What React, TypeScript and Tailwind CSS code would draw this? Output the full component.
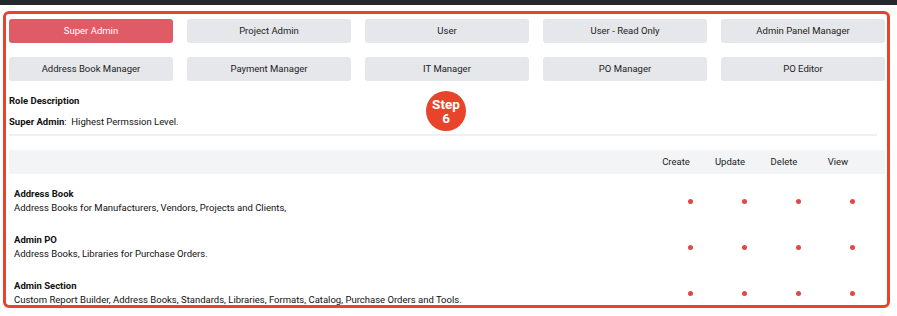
import React from "react";

const roles = [
  "Super Admin",
  "Project Admin",
  "User",
  "User - Read Only",
  "Admin Panel Manager",
  "Address Book Manager",
  "Payment Manager",
  "IT Manager",
  "PO Manager",
  "PO Editor",
];

const rows = [
  { title: "Address Book", desc: "Address Books for Manufacturers, Vendors, Projects and Clients," },
  { title: "Admin PO", desc: "Address Books, Libraries for Purchase Orders." },
  {
    title: "Admin Section",
    desc: "Custom Report Builder, Address Books, Standards, Libraries, Formats, Catalog, Purchase Orders and Tools.",
  },
];

const cols = ["Create", "Update", "Delete", "View"];

export default function App() {
  return (
    <div
      className="w-[897px] h-[316px] bg-white overflow-hidden text-[#111]"
      style={{ fontFamily: "Roboto, 'Liberation Sans', sans-serif" }}
    >
      <div className="h-[5px] bg-[#25282c]" />
      <div className="relative mt-[6px] ml-[3px] w-[887px] h-[297px] border-[3px] border-[#e8442b] rounded-[6px] overflow-hidden">
        <div className="pl-[3px] pt-[5px]">
          <div className="grid grid-cols-[repeat(5,164px)] gap-[14px]">
            {roles.map((r, i) => (
              <div
                key={r}
                className={
                  i === 0
                    ? "h-[24px] rounded-[3px] flex items-center justify-center text-[9.5px] bg-[#df5c67] text-white"
                    : "h-[24px] rounded-[3px] flex items-center justify-center text-[9.5px] bg-[#e6e7ea] text-[#222]"
                }
              >
                {r}
              </div>
            ))}
          </div>
          <div className="mt-[13px] text-[9.5px] leading-[14px] font-bold">Role Description</div>
          <div className="mt-[7px] text-[9.5px] leading-[14px]">
            <span className="font-bold">Super Admin</span>:&nbsp;&nbsp;Highest Permssion Level.
          </div>
          <div className="mt-[5px] h-[2px] bg-[#f0f0f0] mr-[10px]" />
          <div className="mt-[14px] h-[24px] bg-[#f3f4f6] flex justify-end pr-[20px] mr-[2px]">
            {cols.map((c) => (
              <div key={c} className="w-[54px] flex items-center justify-center text-[9.5px] text-[#222]">
                {c}
              </div>
            ))}
          </div>
          <div className="mt-[13px] flex flex-col gap-[18px] mr-[2px]">
            {rows.map((row) => (
              <div key={row.title} className="flex items-center pl-[5px]">
                <div className="flex-1 min-w-0">
                  <div className="text-[9.5px] leading-[14px] font-bold">{row.title}</div>
                  <div className="text-[9.5px] leading-[14px] whitespace-nowrap">{row.desc}</div>
                </div>
                <div className="flex pr-[20px]">
                  {cols.map((c) => (
                    <div key={c} className="w-[54px] flex justify-center">
                      <div className="ml-[28px] w-[5px] h-[5px] rounded-full bg-[#e04848]" />
                    </div>
                  ))}
                </div>
              </div>
            ))}
          </div>
        </div>
        <div className="absolute left-[420px] top-[77px] w-[40px] h-[40px] rounded-full bg-[#e8442b] text-white font-bold text-[13.5px] leading-[14px] flex flex-col items-center justify-center">
          <span>Step</span>
          <span>6</span>
        </div>
      </div>
    </div>
  );
}
